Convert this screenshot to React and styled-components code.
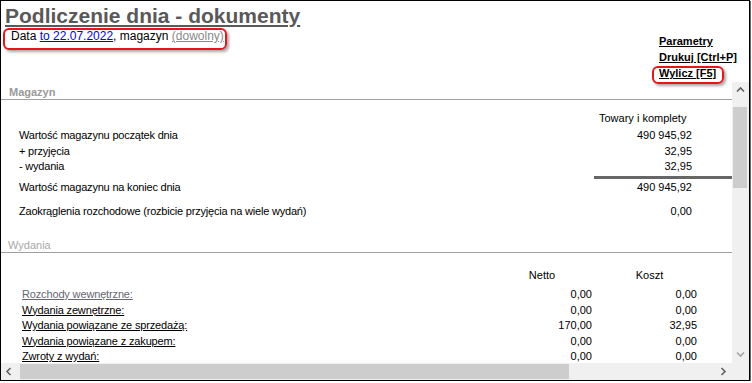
import React from "react";
import styled, { createGlobalStyle } from "styled-components";

const GlobalStyle = createGlobalStyle`
  html, body { margin: 0; padding: 0; background: #fff; }
  body { font-family: "Liberation Sans", Arial, sans-serif; color: #000; }
  * { box-sizing: border-box; }
`;

const Frame = styled.div`
  width: 750px;
  height: 381px;
  border: 1px solid #000;
  box-shadow: 1px 1px 0 #6a6a6a;
  display: flex;
  flex-direction: column;
  overflow: hidden;
  background: #fff;
`;

const Header = styled.header`
  height: 81px;
  flex-shrink: 0;
  display: flex;
  justify-content: space-between;
  align-items: flex-start;
`;

const TitleBlock = styled.div`
  padding: 3px 0 0 4px;
  display: flex;
  flex-direction: column;
  align-items: flex-start;
`;

const Title = styled.h1`
  margin: 0;
  font-family: "Liberation Sans", Arial, sans-serif;
  font-weight: bold;
  font-size: 21px;
  line-height: 24px;
  color: #595959;
  text-decoration: underline;
`;

const Annotated = styled.div`
  border: 2px solid #e8141c;
  border-radius: 6px;
  box-shadow: 2px 2px 3px rgba(0, 0, 0, 0.35);
`;

const DateBox = styled(Annotated)`
  margin-left: -2px;
  padding: 0 1px 6px 6px;
  font-size: 12px;
  line-height: 12px;
  white-space: nowrap;
`;

const BlueLink = styled.a`
  color: #0000ee;
  text-decoration: underline;
`;

const GreyLink = styled.a`
  color: #8a8a8a;
  text-decoration: underline;
`;

const LinkColumn = styled.nav`
  width: 90px;
  padding-top: 32px;
  display: flex;
  flex-direction: column;
  align-items: flex-start;
`;

const ActionLink = styled.a`
  font-weight: bold;
  font-size: 11px;
  line-height: 16px;
  color: #000;
  text-decoration: underline;
  white-space: nowrap;
`;

const ActionBox = styled(Annotated)`
  margin: 1px 0 0 -7px;
  padding: 0 6px 3px 5px;
  ${ActionLink} { line-height: 11px; display: block; }
`;

const Pane = styled.div`
  flex: 1;
  min-height: 0;
  display: grid;
  grid-template-columns: 1fr 17px;
  grid-template-rows: 1fr 17px;
`;

const Content = styled.div`
  overflow: hidden;
  font-size: 11px;
`;

const SectionHeader = styled.div`
  padding: 3px 0 0 ${(p) => p.$indent}px;
  line-height: 14px;
  font-size: 11px;
  font-weight: ${(p) => (p.$bold ? "bold" : "normal")};
  color: ${(p) => (p.$bold ? "#9a9a9a" : "#a8a8a8")};
  border-bottom: 1px solid #a0a0a0;
  margin-top: ${(p) => p.$top || 0}px;
`;

const StockGrid = styled.div`
  display: grid;
  grid-template-columns: 1fr 138px;
  padding: 10px 0 0 18px;
`;

const ColumnTitle = styled.div`
  grid-column: 2;
  padding-left: 5px;
  line-height: 16px;
  padding-bottom: 1px;
`;

const Label = styled.div`
  grid-column: 1;
  margin-top: ${(p) => p.$top || 0}px;
  white-space: nowrap;
  letter-spacing: -0.2px;
`;

const Value = styled.div`
  text-align: right;
  padding-right: ${(p) => p.$pr}px;
  margin-top: ${(p) => p.$top || 0}px;
`;

const StockLabel = styled(Label)`
  padding-top: 2px;
  line-height: 13.5px;
`;

const StockValue = styled(Value)`
  padding-top: 2px;
  line-height: 13.5px;
`;

const Rule = styled.div`
  grid-column: 2;
  height: 3px;
  background: #666;
  margin-top: 2.5px;
`;

const IssueGrid = styled.div`
  display: grid;
  grid-template-columns: 1fr 110px 105px 30px;
  padding: 14px 0 0 21px;
  line-height: 15.5px;
`;

const HeadCell = styled.div`
  text-align: center;
  line-height: 16px;
  margin-bottom: 4.5px;
  grid-column: ${(p) => p.$col};
`;

const RowLink = styled.a`
  grid-column: 1;
  color: ${(p) => (p.$muted ? "#666670" : "#000")};
  text-decoration: underline;
  white-space: nowrap;
  letter-spacing: -0.15px;
`;

const VScroll = styled.div`
  background: #f0f0f0;
  display: flex;
  flex-direction: column;
`;

const HScroll = styled.div`
  background: #f0f0f0;
  display: flex;
`;

const Corner = styled.div`
  background: #f0f0f0;
`;

const ArrowButton = styled.div`
  width: 17px;
  height: 17px;
  flex-shrink: 0;
  display: flex;
  align-items: center;
  justify-content: center;
`;

const Track = styled.div`
  flex: 1;
`;

const VThumb = styled.div`
  margin: 8px 0 0 1px;
  width: 14px;
  height: 81px;
  background: #cdcdcd;
`;

const HThumb = styled.div`
  margin: 1px 0 0 2px;
  height: 15px;
  width: 549px;
  background: #cdcdcd;
`;

const Chevron = ({ dir, color }) => {
  const paths = {
    up: "M1 5.5 L4.5 2 L8 5.5",
    down: "M1 2.5 L4.5 6 L8 2.5",
    left: "M5.5 1 L2 4.5 L5.5 8",
    right: "M2.5 1 L6 4.5 L2.5 8",
  };
  return (
    <svg width="9" height="9" viewBox="0 0 9 9">
      <path d={paths[dir]} fill="none" stroke={color} strokeWidth="1.6" />
    </svg>
  );
};

const stockRows = [
  { label: "Wartość magazynu początek dnia", value: "490 945,92" },
  { label: "+ przyjęcia", value: "32,95" },
  { label: "- wydania", value: "32,95" },
];

const issueRows = [
  { label: "Rozchody wewnętrzne:", netto: "0,00", koszt: "0,00", muted: true },
  { label: "Wydania zewnętrzne:", netto: "0,00", koszt: "0,00" },
  { label: "Wydania powiązane ze sprzedażą:", netto: "170,00", koszt: "32,95" },
  { label: "Wydania powiązane z zakupem:", netto: "0,00", koszt: "0,00" },
  { label: "Zwroty z wydań:", netto: "0,00", koszt: "0,00" },
];

export default function App() {
  return (
    <>
      <GlobalStyle />
      <Frame>
        <Header>
          <TitleBlock>
            <Title>Podliczenie dnia - dokumenty</Title>
            <DateBox>
              Data <BlueLink>to 22.07.2022</BlueLink>, magazyn{" "}
              <GreyLink>(dowolny)</GreyLink>
            </DateBox>
          </TitleBlock>
          <LinkColumn>
            <ActionLink>Parametry</ActionLink>
            <ActionLink>Drukuj [Ctrl+P]</ActionLink>
            <ActionBox>
              <ActionLink>Wylicz [F5]</ActionLink>
            </ActionBox>
          </LinkColumn>
        </Header>
        <Pane>
          <Content>
            <SectionHeader $bold $indent={8}>Magazyn</SectionHeader>
            <StockGrid>
              <ColumnTitle>Towary i komplety</ColumnTitle>
              {stockRows.map((r) => (
                <React.Fragment key={r.label}>
                  <StockLabel>{r.label}</StockLabel>
                  <StockValue $pr={40}>{r.value}</StockValue>
                </React.Fragment>
              ))}
              <Rule />
              <StockLabel>Wartość magazynu na koniec dnia</StockLabel>
              <StockValue $pr={40}>490 945,92</StockValue>
              <StockLabel $top={8.5}>
                Zaokrąglenia rozchodowe (rozbicie przyjęcia na wiele wydań)
              </StockLabel>
              <StockValue $pr={40} $top={8.5}>0,00</StockValue>
            </StockGrid>
            <SectionHeader $indent={7} $top={16}>Wydania</SectionHeader>
            <IssueGrid>
              <HeadCell $col={2}>Netto</HeadCell>
              <HeadCell $col={3}>Koszt</HeadCell>
              {issueRows.map((r) => (
                <React.Fragment key={r.label}>
                  <RowLink $muted={r.muted}>{r.label}</RowLink>
                  <Value $pr={5}>{r.netto}</Value>
                  <Value $pr={5}>{r.koszt}</Value>
                  <div />
                </React.Fragment>
              ))}
            </IssueGrid>
          </Content>
          <VScroll>
            <ArrowButton>
              <Chevron dir="up" color="#606060" />
            </ArrowButton>
            <Track>
              <VThumb />
            </Track>
            <ArrowButton>
              <Chevron dir="down" color="#a3a3a3" />
            </ArrowButton>
          </VScroll>
          <HScroll>
            <ArrowButton>
              <Chevron dir="left" color="#606060" />
            </ArrowButton>
            <Track>
              <HThumb />
            </Track>
            <ArrowButton>
              <Chevron dir="right" color="#606060" />
            </ArrowButton>
          </HScroll>
          <Corner />
        </Pane>
      </Frame>
    </>
  );
}
